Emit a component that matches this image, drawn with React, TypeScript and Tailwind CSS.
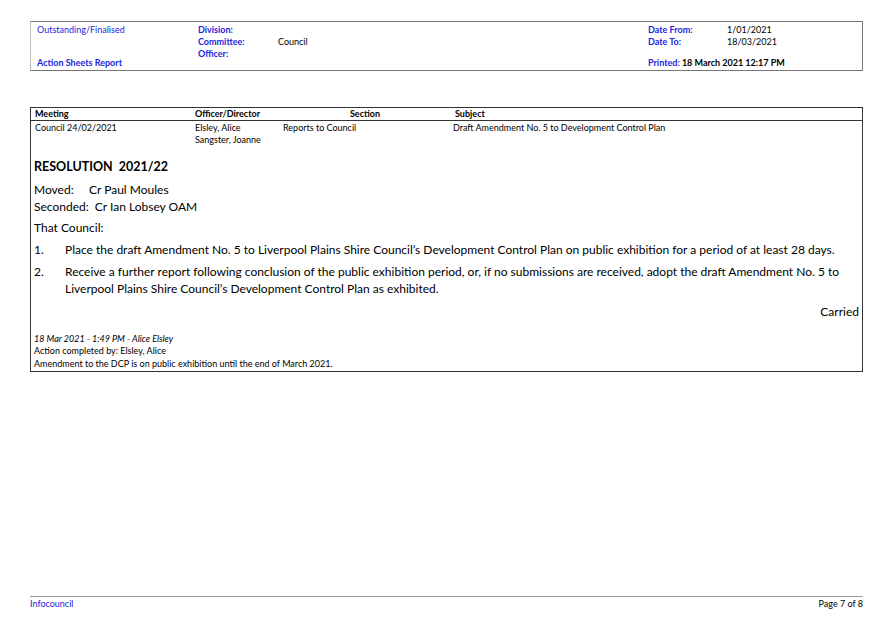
export default function App() {
  const font = { fontFamily: "Lato, 'Noto Sans', sans-serif" };
  return (
    <div className="w-[893px] h-[626px] bg-white text-black flex flex-col px-[30px]" style={font}>
      {/* report header */}
      <div className="mt-[21px] h-[50px] border border-[#777] border-l-[#bbb] flex text-[9px] leading-[12px]">
        <div className="w-[167px] pl-[6px] pt-[2px] flex flex-col justify-between pb-[1px] text-[#2424e0]">
          <span>Outstanding/Finalised</span>
          <span className="font-bold">Action Sheets Report</span>
        </div>
        <div className="pt-[2px] flex-1">
          <div className="flex"><span className="w-[80px] font-bold text-[#2424e0]">Division:</span></div>
          <div className="flex"><span className="w-[80px] font-bold text-[#2424e0]">Committee:</span><span>Council</span></div>
          <div className="flex"><span className="w-[80px] font-bold text-[#2424e0]">Officer:</span></div>
        </div>
        <div className="w-[214px] pt-[2px] flex flex-col justify-between pb-[1px]">
          <div>
            <div className="flex"><span className="w-[79px] font-bold text-[#2424e0]">Date From:</span><span>1/01/2021</span></div>
            <div className="flex"><span className="w-[79px] font-bold text-[#2424e0]">Date To:</span><span>18/03/2021</span></div>
          </div>
          <div className="font-bold"><span className="text-[#2424e0]">Printed:</span> 18 March 2021 12:17 PM</div>
        </div>
      </div>

      {/* table */}
      <div className="mt-[36px] h-[265px] border border-[#333] border-t-[1.5px] border-l-[1.5px] text-[9px] leading-[12px] flex flex-col">
        <div className="flex h-[13px] border-b-[1.5px] border-[#333] font-bold items-center">
          <div className="w-[164px] pl-[4px]">Meeting</div>
          <div className="w-[80px]">Officer/Director</div>
          <div className="w-[180px] text-center">Section</div>
          <div className="flex-1">Subject</div>
        </div>
        <div className="flex pt-[1px]">
          <div className="w-[164px] pl-[4px]">Council 24/02/2021</div>
          <div className="w-[88px]">Elsley, Alice<br />Sangster, Joanne</div>
          <div className="w-[170px]">Reports to Council</div>
          <div className="flex-1">Draft Amendment No. 5 to Development Control Plan</div>
        </div>
        <div className="px-[3px] text-[12px] leading-[17px]">
          <div className="font-bold mt-[12px] text-[12.5px]">RESOLUTION&nbsp; 2021/22</div>
          <div className="mt-[6px]">Moved:&nbsp;&nbsp;&nbsp;&nbsp; Cr Paul Moules</div>
          <div>Seconded:&nbsp; Cr Ian Lobsey OAM</div>
          <div className="mt-[4px]">That Council:</div>
          <div className="flex mt-[5px]"><span className="w-[31px] shrink-0">1.</span><span>Place the draft Amendment No. 5 to Liverpool Plains Shire Council’s Development Control Plan on public exhibition for a period of at least 28 days.</span></div>
          <div className="flex mt-[5px]"><span className="w-[31px] shrink-0">2.</span><span>Receive a further report following conclusion of the public exhibition period, or, if no submissions are received, adopt the draft Amendment No. 5 to Liverpool Plains Shire Council’s Development Control Plan as exhibited.</span></div>
          <div className="text-right mt-[6px]">Carried</div>
        </div>
        <div className="pl-[3px] mt-auto pb-[1px] leading-[12.5px]">
          <div className="italic">18 Mar 2021 - 1:49 PM - Alice Elsley</div>
          <div>Action completed by: Elsley, Alice</div>
          <div>Amendment to the DCP is on public exhibition until the end of March 2021.</div>
        </div>
      </div>

      {/* footer */}
      <div className="mt-auto mb-[16px] border-t border-[#999] flex justify-between pt-[1px] text-[9px] leading-[12px]">
        <span className="text-[#2424e0]">Infocouncil</span>
        <span>Page 7 of 8</span>
      </div>
    </div>
  );
}
